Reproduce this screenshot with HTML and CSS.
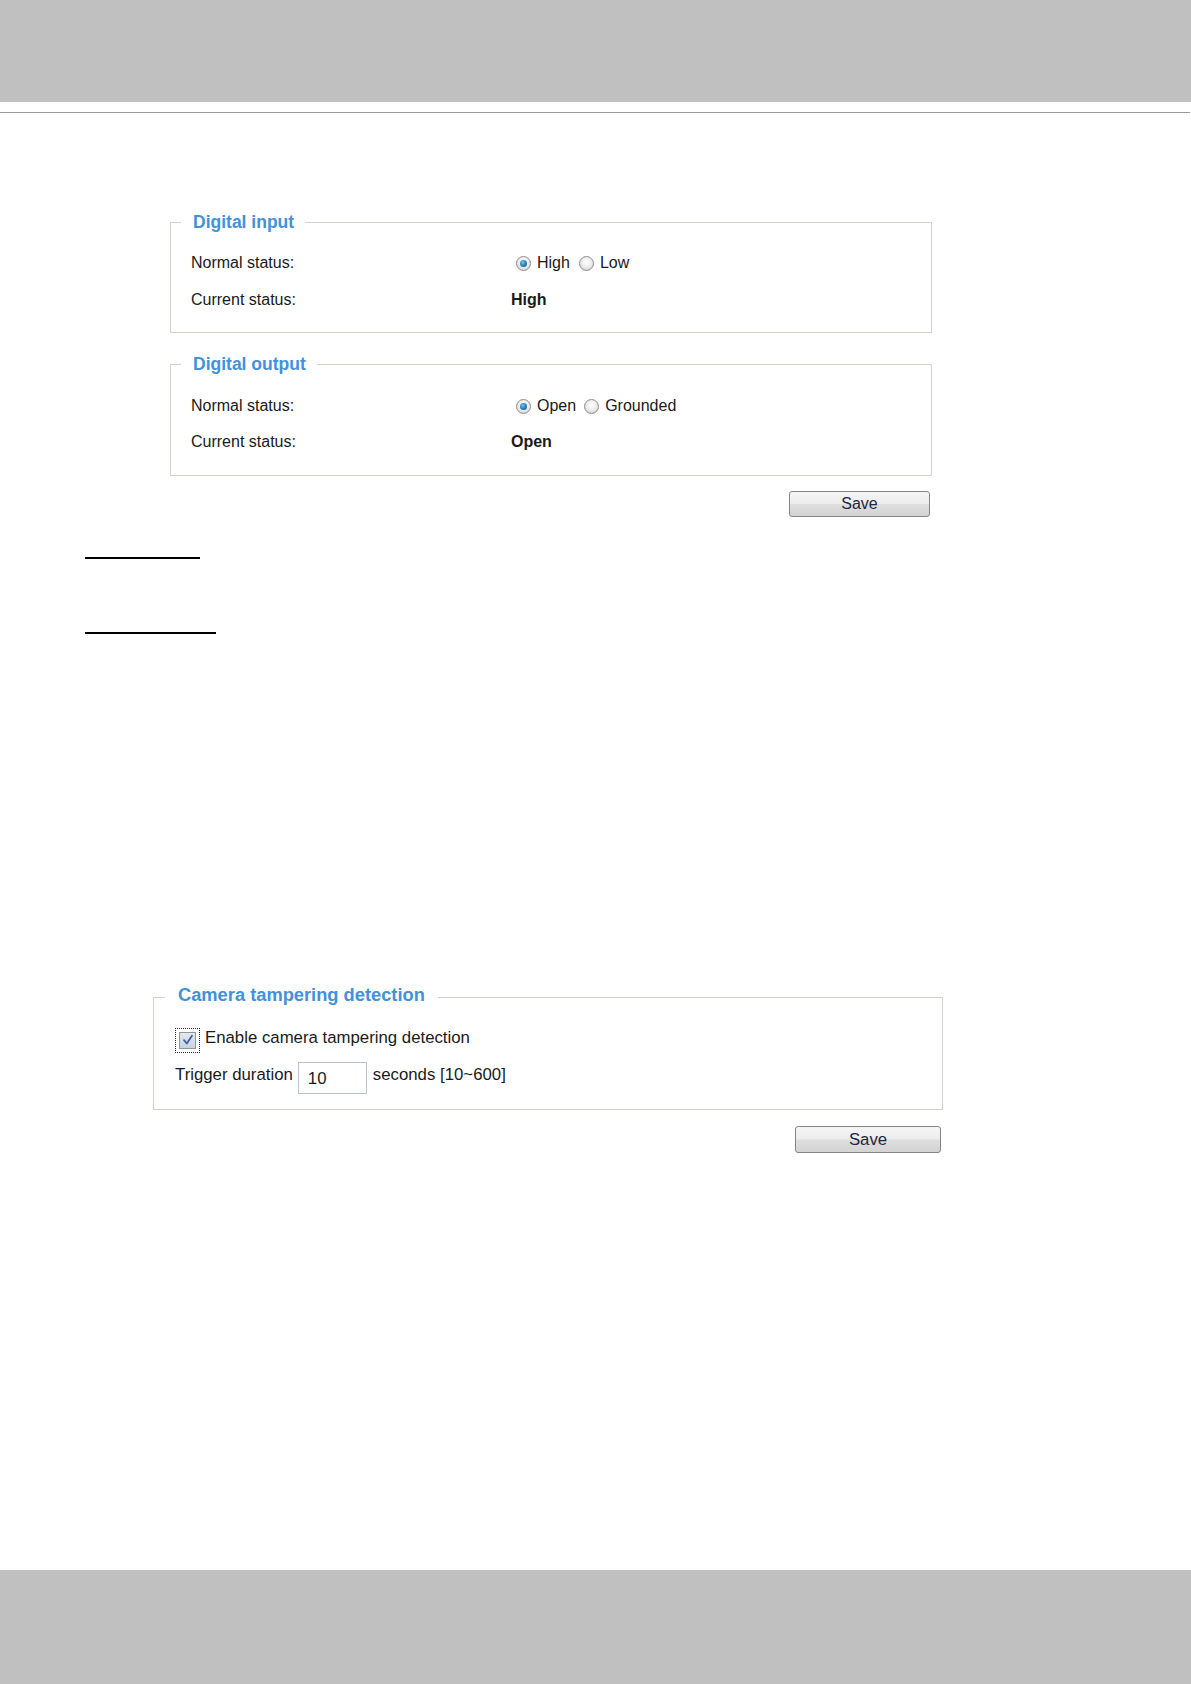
FILE: index.html
```html
<!DOCTYPE html>
<html>
<head>
<meta charset="utf-8">
<title>Digital input / output</title>
<link rel="stylesheet" href="styles.css">
</head>
<body>
<div class="header"></div>
<div class="rule"></div>

<main class="content">
  <section class="io-block">
    <fieldset class="box box-io">
      <legend class="legend legend-io">Digital input</legend>
      <div class="box-body io-body">
        <div class="row">
          <span class="label">Normal status:</span>
          <span class="value">
            <label class="opt first"><span class="radio checked"></span>High</label>
            <label class="opt"><span class="radio"></span>Low</label>
          </span>
        </div>
        <div class="row">
          <span class="label">Current status:</span>
          <span class="value strong">High</span>
        </div>
      </div>
    </fieldset>

    <fieldset class="box box-io box-out">
      <legend class="legend legend-io">Digital output</legend>
      <div class="box-body io-body out-body">
        <div class="row">
          <span class="label">Normal status:</span>
          <span class="value">
            <label class="opt first"><span class="radio checked"></span>Open</label>
            <label class="opt opt-wide"><span class="radio"></span>Grounded</label>
          </span>
        </div>
        <div class="row">
          <span class="label">Current status:</span>
          <span class="value strong">Open</span>
        </div>
      </div>
    </fieldset>

    <div class="actions">
      <button class="btn btn-io" type="button">Save</button>
    </div>
  </section>

  <div class="underline u1"></div>
  <div class="underline u2"></div>

  <section class="tamper-block">
    <fieldset class="box box-tamper">
      <legend class="legend legend-tamper">Camera tampering detection</legend>
      <div class="box-body tamper-body">
        <div class="trow trow-check">
          <span class="check-focus">
            <span class="check">
              <svg width="12" height="12" viewBox="0 0 12 12"><path d="M2 6.2 L4.8 9.5 L10 1.8" fill="none" stroke="#3f5fa6" stroke-width="1.8" stroke-linecap="round" stroke-linejoin="round"/></svg>
            </span>
          </span>
          <span class="ttext shift">Enable camera tampering detection</span>
        </div>
        <div class="trow trow-input">
          <span class="ttext shift2">Trigger duration</span>
          <span class="input">10</span>
          <span class="ttext shift2">seconds [10~600]</span>
        </div>
      </div>
    </fieldset>
    <div class="actions actions-tamper">
      <button class="btn btn-tamper" type="button">Save</button>
    </div>
  </section>
</main>

<div class="footer"></div>
</body>
</html>
```
FILE: styles.css
```css
html, body {
  margin: 0;
  padding: 0;
}
body {
  min-height: 100vh;
  display: flex;
  flex-direction: column;
  background: #ffffff;
  font-family: "Liberation Sans", Arial, sans-serif;
  color: #1a1a1a;
}
.header {
  height: 102px;
  background: #bfc0bf;
}
.rule {
  margin-top: 10px;
  width: 1190px;
  height: 1px;
  background: #9b9b9b;
}
.content {
  display: flex;
  flex-direction: column;
}

/* fieldsets */
.box {
  margin: 0;
  padding: 0;
  border: 1px solid #d2d2ca;
  min-width: 0;
}
.legend {
  font-weight: bold;
  color: #4291d9;
}
.legend-io {
  font-size: 17.5px;
  line-height: 20px;
  margin-left: 10px;
  padding: 0 11px 0 12px;
}
.io-block {
  margin-left: 170px;
  width: 762px;
  margin-top: 99px;
  display: flex;
  flex-direction: column;
}
.io-body {
  padding: 18px 20px 19px 20px;
  display: flex;
  flex-direction: column;
  gap: 11px;
  font-size: 16px;
}
.box-out {
  margin-top: 21px;
}
.out-body {
  padding-top: 19px;
  padding-bottom: 20px;
  gap: 10px;
}
.row {
  height: 26px;
  display: flex;
  align-items: center;
}
.label {
  width: 320px;
  flex: none;
}
.value {
  display: flex;
  align-items: center;
}
.strong {
  font-weight: bold;
}
.opt {
  display: flex;
  align-items: center;
  margin-left: 9px;
}
.opt.first {
  margin-left: 5px;
}
.opt-wide {
  margin-left: 8px;
}
.radio {
  width: 13px;
  height: 13px;
  border-radius: 50%;
  border: 1px solid #8e8e8e;
  background: radial-gradient(circle at 50% 40%, #ffffff 0%, #eeeeee 45%, #c9c9c9 100%);
  margin-right: 6px;
  display: inline-flex;
  align-items: center;
  justify-content: center;
  box-sizing: content-box;
}
.radio.checked::after {
  content: "";
  width: 7px;
  height: 7px;
  border-radius: 50%;
  background: radial-gradient(circle at 40% 35%, #7cc3ee 0%, #2f86c4 45%, #10507f 100%);
}

/* buttons */
.actions {
  display: flex;
  justify-content: flex-end;
  margin-top: 15px;
  padding-right: 2px;
}
.btn {
  font-family: "Liberation Sans", Arial, sans-serif;
  color: #1e2640;
  border: 1px solid #858585;
  border-radius: 3px;
  background: linear-gradient(#f5f5f5 0%, #ececec 48%, #dedede 52%, #d3d3d3 100%);
  padding: 0;
  margin: 0;
}
.btn-io {
  width: 141px;
  height: 26px;
  font-size: 16px;
}
.btn-tamper {
  width: 146px;
  height: 27px;
  font-size: 16.8px;
}

/* underlines */
.underline {
  margin-left: 85px;
  height: 2px;
  background: #000000;
}
.u1 {
  width: 115px;
  margin-top: 40px;
}
.u2 {
  width: 131px;
  margin-top: 73px;
}

/* tampering */
.tamper-block {
  margin-left: 153px;
  width: 790px;
  margin-top: 350px;
  display: flex;
  flex-direction: column;
}
.legend-tamper {
  font-size: 18.3px;
  line-height: 22px;
  margin-left: 11px;
  padding: 0 13px 4px 13px;
}
.tamper-body {
  padding: 17px 20px 15px 21px;
  display: flex;
  flex-direction: column;
  gap: 9px;
  font-size: 16.8px;
}
.trow {
  display: flex;
  align-items: center;
}
.trow-check {
  height: 26px;
}
.check-focus {
  width: 23px;
  height: 23px;
  border: 1px dotted #2a2a2a;
  display: flex;
  align-items: center;
  justify-content: center;
  margin-right: 5px;
}
.check {
  width: 15px;
  height: 15px;
  border: 1px solid #8f959c;
  background: linear-gradient(#e4e9ef, #c9d2dd);
  display: flex;
  align-items: center;
  justify-content: center;
}
.shift {
  margin-bottom: 4px;
}
.shift2 {
  margin-bottom: 6px;
}
.input {
  width: 58px;
  height: 28px;
  border: 1px solid #b5c3d3;
  margin: 0 6px 0 5px;
  padding-left: 9px;
  display: flex;
  align-items: center;
  padding-top: 2px;
  box-sizing: content-box;
}
.actions-tamper {
  margin-top: 16px;
  padding-right: 2px;
}

.footer {
  margin-top: auto;
  height: 114px;
  background: #bfc0bf;
}
```
